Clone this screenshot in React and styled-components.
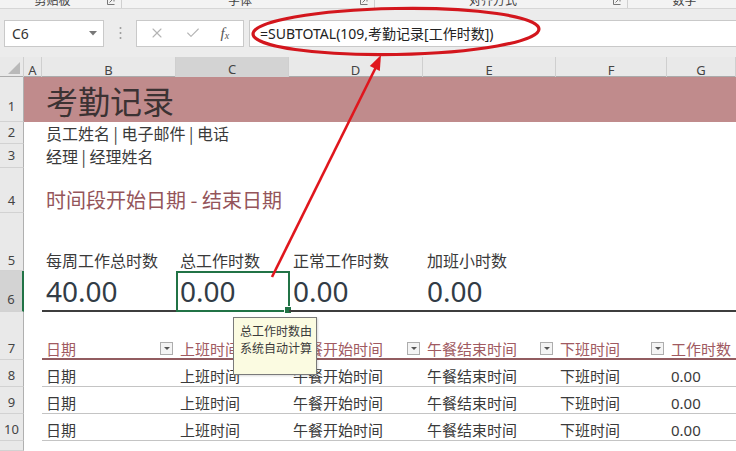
import styled, { createGlobalStyle } from "styled-components"
import { X, Check } from "lucide-react"

const COLS = "24px 18px 134px 113px 134px 133px 111px 69px"
const LETTERS = ["A", "B", "C", "D", "E", "F", "G"]
const HEADERS = ["日期", "上班时间", "午餐开始时间", "午餐结束时间", "下班时间", "工作时数"]
const ROW = ["日期", "上班时间", "午餐开始时间", "午餐结束时间", "下班时间", "0.00"]

const GlobalStyle = createGlobalStyle`
  html, body { margin: 0; padding: 0; }
  body {
    width: 736px;
    height: 451px;
    overflow: hidden;
    background: #fff;
    font-family: "Noto Sans", "Noto Sans CJK SC", sans-serif;
    color: #3a3a3a;
  }
  * { box-sizing: border-box; }
`

const Page = styled.div`
  position: relative;
  width: 736px;
  height: 451px;
  overflow: hidden;
  display: flex;
  flex-direction: column;
`

const Ribbon = styled.div`
  height: 9px;
  flex: none;
  display: flex;
  background: #f3f3f3;
  border-bottom: 1px solid #d6d6d6;
  overflow: hidden;
`

const Group = styled.div`
  width: ${p => p.$w}px;
  flex: none;
  display: flex;
  justify-content: center;
  position: relative;
  padding-right: 16px;
  border-right: 1px solid #d0d0d0;
`

const GroupLabel = styled.span`
  font-size: 12px;
  line-height: 12px;
  margin-top: -6px;
  color: #444;
  font-family: "Noto Sans CJK SC", sans-serif;
`

const Launcher = styled.svg`
  position: absolute;
  right: 6px;
  top: -3px;
`

const FormulaArea = styled.div`
  height: 48px;
  flex: none;
  display: flex;
  align-items: center;
  padding-left: 4px;
  background: #ececec;
`

const NameBox = styled.div`
  width: 100px;
  height: 27px;
  flex: none;
  display: flex;
  align-items: center;
  justify-content: space-between;
  padding: 0 6px 0 7px;
  background: #fff;
  border: 1px solid #c9c9c9;
  font-size: 14px;
  color: #333;
`

const Dots = styled.div`
  width: 32px;
  flex: none;
  display: flex;
  justify-content: center;
`

const ButtonBox = styled.div`
  width: 108px;
  height: 27px;
  flex: none;
  display: flex;
  align-items: center;
  justify-content: space-around;
  padding: 0 4px 0 2px;
  background: #fff;
  border: 1px solid #c9c9c9;
`

const Fx = styled.span`
  font-family: "Liberation Serif", serif;
  font-style: italic;
  font-size: 15px;
  color: #555;
  sub {
    font-size: 10px;
    vertical-align: -1px;
  }
`

const FormulaInput = styled.div`
  flex: 1;
  height: 27px;
  margin-left: 5px;
  display: flex;
  align-items: center;
  padding-left: 10px;
  background: #fff;
  border: 1px solid #c9c9c9;
  border-right: none;
  font-size: 14px;
  color: #222;
  white-space: nowrap;
`

const ColumnHeads = styled.div`
  display: grid;
  grid-template-columns: ${COLS};
  height: 20px;
  flex: none;
  background: #e9e9e9;
  border-bottom: 1px solid #ababab;
`

const Corner = styled.div`
  border-right: 1px solid #cfcfcf;
`

const ColHead = styled.div`
  display: flex;
  align-items: center;
  justify-content: center;
  font-size: 13px;
  color: #444;
  border-right: 1px solid #cfcfcf;
  background: ${p => (p.$active ? "#d3d3d3" : "transparent")};
  border-bottom: ${p => (p.$active ? "2px solid #217346" : "none")};
`

const Row = styled.div`
  display: grid;
  grid-template-columns: ${COLS};
  height: ${p => p.$h}px;
  flex: none;
  background: ${p => p.$bg || "#fff"};
  & > :nth-child(n + 3) {
    border-bottom: ${p => p.$rule || "none"};
  }
`

const RowHead = styled.div`
  display: flex;
  align-items: flex-end;
  justify-content: center;
  padding-bottom: ${p => p.$pb ?? 4}px;
  font-size: 13px;
  color: #444;
  background: ${p => (p.$active ? "#d3d3d3" : "#e9e9e9")};
  border-right: ${p => (p.$active ? "2px solid #217346" : "1px solid #b0b0b0")};
  border-bottom: 1px solid #d2d2d2;
`

const Cell = styled.div`
  position: relative;
  display: flex;
  align-items: ${p => p.$align || "flex-end"};
  justify-content: space-between;
  padding: 0 3px 0 4px;
  white-space: nowrap;
  min-width: 0;
  font-size: ${p => p.$size || 15}px;
  line-height: ${p => p.$lh || 18}px;
  color: ${p => p.$color || "#3a3a3a"};
  font-family: ${p => (p.$latin ? `"Noto Sans", sans-serif` : `"Noto Sans CJK SC", sans-serif`)};
`

const Title = styled.span`
  font-size: 32px;
  line-height: 40px;
  color: #3b3233;
  font-family: "Noto Sans CJK SC", sans-serif;
`

const Value = styled.span`
  font-family: "Noto Sans", sans-serif;
  font-size: 28px;
  line-height: 34px;
  color: #323c46;
  padding-bottom: 2px;
`

const FilterBtn = styled.span`
  width: 13px;
  height: 13px;
  flex: none;
  margin-bottom: 3px;
  display: flex;
  align-items: center;
  justify-content: center;
  background: #f4f4f4;
  border: 1px solid #adadad;
  &::after {
    content: "";
    border-left: 3px solid transparent;
    border-right: 3px solid transparent;
    border-top: 3px solid #555;
  }
`

const Selection = styled.span`
  position: absolute;
  left: 0;
  right: -1px;
  top: 0;
  bottom: -2px;
  border: 2px solid #217346;
  pointer-events: none;
  &::after {
    content: "";
    position: absolute;
    right: -4px;
    bottom: -4px;
    width: 6px;
    height: 6px;
    background: #217346;
    border: 1px solid #fff;
  }
`

const Note = styled.div`
  position: absolute;
  left: 57px;
  top: 46px;
  width: 84px;
  height: 58px;
  z-index: 10;
  padding: 4px 0 0 6px;
  background: #fbfbe1;
  border: 1px solid #7a7a7a;
  box-shadow: 1px 1px 2px rgba(0, 0, 0, 0.15);
  font-family: "Noto Sans CJK SC", sans-serif;
  font-size: 12px;
  line-height: 17px;
  color: #3a3a3a;
  white-space: nowrap;
`

const Filler = styled.div`
  flex: 1;
  display: grid;
  grid-template-columns: ${COLS};
`

const Annotation = styled.svg`
  position: absolute;
  left: 0;
  top: 0;
  z-index: 20;
  pointer-events: none;
`

function Caret() {
  return (
    <svg width="8" height="5" viewBox="0 0 8 5">
      <path d="M0 0 L8 0 L4 4.5 Z" fill="#777" />
    </svg>
  )
}

function RibbonGroup({ w, label }) {
  return (
    <Group $w={w}>
      <GroupLabel>{label}</GroupLabel>
      <Launcher width="8" height="8" viewBox="0 0 8 8">
        <path d="M0.5 0 V7.5 H7.5 M2.5 5.5 L7 1 M3.5 1 H7 V4.5" fill="none" stroke="#777" strokeWidth="1" />
      </Launcher>
    </Group>
  )
}

export default function App() {
  return (
    <Page>
      <GlobalStyle />
      <Ribbon>
        <RibbonGroup w={122} label="剪贴板" />
        <RibbonGroup w={253} label="字体" />
        <RibbonGroup w={253} label="对齐方式" />
        <RibbonGroup w={130} label="数字" />
      </Ribbon>

      <FormulaArea>
        <NameBox>
          C6
          <Caret />
        </NameBox>
        <Dots>
          <svg width="3" height="14" viewBox="0 0 3 14">
            <circle cx="1.5" cy="2" r="1" fill="#9a9a9a" />
            <circle cx="1.5" cy="7" r="1" fill="#9a9a9a" />
            <circle cx="1.5" cy="12" r="1" fill="#9a9a9a" />
          </svg>
        </Dots>
        <ButtonBox>
          <X size={16} color="#b4b4b4" strokeWidth={1.6} />
          <Check size={16} color="#b4b4b4" strokeWidth={1.6} />
          <Fx>f<sub>x</sub></Fx>
        </ButtonBox>
        <FormulaInput>=SUBTOTAL(109,考勤记录[工作时数])</FormulaInput>
      </FormulaArea>

      <ColumnHeads>
        <Corner>
          <svg width="23" height="20" viewBox="0 0 23 20">
            <path d="M20 5 L20 17 L8 17 Z" fill="#b9b9b9" />
          </svg>
        </Corner>
        {LETTERS.map(l => (
          <ColHead key={l} $active={l === "C"}>{l}</ColHead>
        ))}
      </ColumnHeads>

      <Row $h={45} $bg="#c08b8c">
        <RowHead $pb={6}>1</RowHead>
        <Cell />
        <Cell $align="center">
          <Title>考勤记录</Title>
        </Cell>
      </Row>

      <Row $h={22}>
        <RowHead $pb={2}>2</RowHead>
        <Cell />
        <Cell $align="center" $size={16} $lh={20}>员工姓名 | 电子邮件 | 电话</Cell>
      </Row>

      <Row $h={24}>
        <RowHead $pb={3}>3</RowHead>
        <Cell />
        <Cell $align="center" $size={16} $lh={20}>经理 | 经理姓名</Cell>
      </Row>

      <Row $h={45}>
        <RowHead $pb={3}>4</RowHead>
        <Cell />
        <Cell $size={20} $lh={26} $color="#94555a">时间段开始日期 - 结束日期</Cell>
      </Row>

      <Row $h={58}>
        <RowHead $pb={1}>5</RowHead>
        <Cell />
        <Cell $size={16} $lh={21}>每周工作总时数</Cell>
        <Cell $size={16} $lh={21}>总工作时数</Cell>
        <Cell $size={16} $lh={21}>正常工作时数</Cell>
        <Cell $size={16} $lh={21}>加班小时数</Cell>
      </Row>

      <Row $h={41} $rule="2px solid #3d3d3d">
        <RowHead $active $pb={3}>6</RowHead>
        <Cell />
        <Cell><Value>40.00</Value></Cell>
        <Cell>
          <Value>0.00</Value>
          <Selection />
          <Note>
            总工作时数由
            <br />
            系统自动计算
          </Note>
        </Cell>
        <Cell><Value>0.00</Value></Cell>
        <Cell><Value>0.00</Value></Cell>
        <Cell />
        <Cell />
      </Row>

      <Row $h={48} $rule="2px solid #925c60">
        <RowHead $pb={2}>7</RowHead>
        <Cell />
        {HEADERS.map((h, i) => (
          <Cell key={h} $color="#a05a61">
            <span>{h}</span>
            {i < 5 && <FilterBtn />}
          </Cell>
        ))}
      </Row>

      {[8, 9, 10].map(n => (
        <Row key={n} $h={27} $rule="1px solid #c4c4c4">
          <RowHead $pb={2}>{n}</RowHead>
          <Cell />
          {ROW.map((t, i) => (
            <Cell key={i} $latin={i === 5} $lh={20}>
              {t}
            </Cell>
          ))}
        </Row>
      ))}

      <Filler>
        <RowHead />
      </Filler>

      <Annotation width="736" height="451" viewBox="0 0 736 451">
        <ellipse cx="396" cy="31.5" rx="143" ry="23" fill="none" stroke="#d3161d" strokeWidth="3.2" transform="rotate(-1 396 31.5)" />
        <line x1="272" y1="277" x2="377" y2="65" stroke="#e0161d" strokeWidth="2.6" />
        <polygon points="381,55 379.8,71 369.8,66" fill="#e0161d" />
      </Annotation>
    </Page>
  )
}
